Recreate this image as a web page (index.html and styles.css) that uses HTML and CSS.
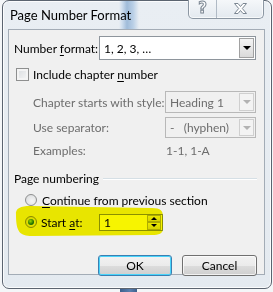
FILE: index.html
```html
<!DOCTYPE html>
<html lang="en">
<head>
  <meta charset="UTF-8">
  <title>Page Number Format</title>
  <link rel="stylesheet" href="styles.css">
</head>
<body>
  <div class="window">
    <div class="titlebar">
      <span class="title">Page Number Format</span>
      <div class="caption-btns">
        <div class="cap-btn help"><span class="help-glyph">?</span></div>
        <div class="cap-btn close">
          <svg width="15" height="13" viewBox="0 0 15 13">
            <path d="M1.5 1.5h3.5l2.5 3 2.5-3h3.5l-4.2 5 4.2 5h-3.5l-2.5-3-2.5 3h-3.5l4.2-5z" fill="#fff" stroke="#7b8692" stroke-width="1" stroke-linejoin="round"/>
          </svg>
        </div>
      </div>
    </div>

    <div class="panel">
      <div class="row row-format">
        <label class="label">Number <u>f</u>ormat:</label>
        <div class="select select-wide">
          <span class="select-text">1, 2, 3, …</span>
          <span class="select-arrow"><i class="tri"></i></span>
        </div>
      </div>

      <div class="row row-check">
        <span class="checkbox"></span>
        <span>Include chapter <u>n</u>umber</span>
      </div>

      <div class="row row-sub row-style">
        <span class="label-sub">Chapter starts with style:</span>
        <div class="select select-off">
          <span class="select-text">Heading 1</span>
          <span class="select-arrow"><i class="tri"></i></span>
        </div>
      </div>

      <div class="row row-sub row-sep">
        <span class="label-sub">Use separator:</span>
        <div class="select select-off">
          <span class="select-text">-&nbsp;&nbsp;&nbsp;(hyphen)</span>
          <span class="select-arrow"><i class="tri"></i></span>
        </div>
      </div>

      <div class="row row-sub row-examples">
        <span class="label-sub">Examples:</span>
        <span class="examples">1-1, 1-A</span>
      </div>

      <div class="row row-group">
        <span>Page numbering</span>
        <span class="group-line"></span>
      </div>

      <div class="row row-radio">
        <span class="radio"></span>
        <span><u>C</u>ontinue from previous section</span>
      </div>

      <div class="row row-radio row-start">
        <span class="radio radio-on"><i class="dot"></i></span>
        <span class="start-label">Start <u>a</u>t:</span>
        <div class="spin">
          <span class="spin-text">1</span>
          <span class="spin-btns">
            <span class="spin-btn"><i class="tri-up"></i></span>
            <span class="spin-btn"><i class="tri"></i></span>
          </span>
        </div>
      </div>

      <div class="row row-buttons">
        <button class="btn btn-default">OK</button>
        <button class="btn">Cancel</button>
      </div>
    </div>

    <svg class="highlight" width="160" height="40" viewBox="0 0 160 40">
      <path d="M4 14 C3 7 9 5 18 5 L140 7 C149 7 151 10 151 16 L151 27 C151 33 147 34 140 34 L20 35 C8 35 4 31 4 14 Z" fill="#f7f400"/>
    </svg>
  </div>
</body>
</html>
```

FILE: styles.css
```css
* {
  margin: 0;
  padding: 0;
  box-sizing: border-box;
}

body {
  width: 273px;
  height: 292px;
  overflow: hidden;
  font-family: 'Lato', 'Noto Sans', sans-serif;
  font-size: 12px;
  color: #000;
  white-space: nowrap;
  background:
    linear-gradient(90deg, transparent 120px, #3d5f8c 120px, #5a7fae 130px, #3d5f8c 137px, transparent 137px) bottom / 100% 6px no-repeat,
    #f4f6f8;
}

u {
  text-decoration: underline;
  text-underline-offset: 2px;
}

/* window frame */
.window {
  position: relative;
  margin-left: 2px;
  width: 270px;
  height: 289px;
  border: 1px solid #5b6470;
  border-radius: 7px;
  background: linear-gradient(180deg, #e9eef3, #e4eaf0);
  box-shadow: inset 0 0 0 1px rgba(255, 255, 255, 0.8);
}

.titlebar {
  display: flex;
  height: 28px;
  align-items: center;
  border-radius: 6px 6px 0 0;
  background: linear-gradient(90deg, transparent 116px, #cfdeee 119px, #9fbbd9 124px, #b9cfe6 130px, transparent 136px);
}

.title {
  padding-left: 7px;
  padding-bottom: 1px;
  font-size: 13px;
  color: #000;
}

.caption-btns {
  display: flex;
  align-self: flex-start;
  margin-left: auto;
  margin-right: 7px;
  margin-top: -2px;
  height: 20px;
  border: 1px solid #8c97a3;
  border-top: none;
  border-radius: 0 0 5px 5px;
  background: linear-gradient(180deg, #f6f8fa, #e3e9ef);
  box-shadow: inset 0 0 0 1px rgba(255, 255, 255, 0.7);
}

.cap-btn {
  display: flex;
  align-items: center;
  justify-content: center;
}

.help {
  width: 28px;
  border-right: 1px solid #b0bac5;
}

.help-glyph {
  font-family: 'DejaVu Sans', sans-serif;
  font-size: 15px;
  font-weight: bold;
  color: #fff;
  -webkit-text-stroke: 1px #7b8692;
  line-height: 1;
}

.close {
  width: 46px;
}

/* client area */
.panel {
  margin: 0 6px 0 5px;
  height: 246px;
  padding: 6px 7px 0 5px;
  border: 1px solid #a3acb6;
  background: #f0f0f0;
}

.row {
  display: flex;
  align-items: center;
}

.row-format {
  height: 24px;
}

.label {
  flex-shrink: 0;
  width: 85px;
}

.select {
  display: flex;
  flex-shrink: 0;
  align-items: center;
  height: 100%;
  border: 1px solid #8e959c;
  background: #fff;
}

.select-wide {
  width: 157px;
}

.select-text {
  flex: 1;
  padding-left: 4px;
}

.select-arrow {
  display: flex;
  align-items: center;
  justify-content: center;
  width: 15px;
  height: calc(100% - 2px);
  margin-right: 1px;
  border: 1px solid #a1a1a1;
  background: linear-gradient(180deg, #f4f4f4, #dadada);
}

.tri {
  width: 0;
  height: 0;
  border-left: 4px solid transparent;
  border-right: 4px solid transparent;
  border-top: 4px solid #000;
}

.tri-up {
  width: 0;
  height: 0;
  border-left: 3px solid transparent;
  border-right: 3px solid transparent;
  border-bottom: 3px solid #000;
}

.row-check {
  height: 22px;
  margin-top: 3px;
  padding-left: 2px;
  gap: 4px;
}

.checkbox {
  width: 13px;
  height: 13px;
  border: 1px solid #8e8f8f;
  background: linear-gradient(135deg, #d9dcdf, #f7f7f7);
  box-shadow: inset 0 0 0 2px #f4f4f4;
}

.row-sub {
  padding-left: 19px;
  color: #6d6d6d;
}

.label-sub {
  flex-shrink: 0;
  width: 132px;
}

.row-style {
  height: 22px;
  margin-top: 6px;
}

.row-sep {
  height: 21px;
  margin-top: 4px;
}

.select-off {
  width: 91px;
  border-color: #b8b8b8;
  background: #f0f0f0;
  color: #6d6d6d;
}

.select-off .select-arrow {
  border-color: #cfcfcf;
  background: #f3f3f3;
}

.select-off .tri {
  border-top-color: #b2b2b2;
}

.row-examples {
  height: 18px;
  margin-top: 3px;
}

.examples {
  padding-left: 1px;
}

.row-group {
  height: 18px;
  margin-top: 10px;
  gap: 4px;
}

.group-line {
  flex: 1;
  height: 2px;
  margin-top: 2px;
  background: #d5dfe5;
  border-bottom: 1px solid #fff;
}

.row-radio {
  height: 18px;
  margin-top: 4px;
  padding-left: 11px;
  gap: 5px;
}

.radio {
  display: flex;
  align-items: center;
  justify-content: center;
  width: 12px;
  height: 12px;
  border: 1px solid #8e8f8f;
  border-radius: 50%;
  background: radial-gradient(circle at 60% 60%, #f6f6f6, #d6d8da);
}

.radio-on .dot {
  width: 6px;
  height: 6px;
  border-radius: 50%;
  background: radial-gradient(circle at 40% 35%, #9fe0ff, #1f77c8 60%, #155a9c);
}

.start-label {
  flex-shrink: 0;
  width: 53px;
  margin-left: -1px;
}

.spin {
  display: flex;
  flex-shrink: 0;
  align-items: center;
  width: 64px;
  height: 17px;
  border: 1px solid #8e959c;
  background: #fff;
}

.spin-text {
  flex: 1;
  padding-left: 4px;
}

.spin-btns {
  display: flex;
  flex-direction: column;
  width: 14px;
  height: 15px;
  margin-right: 1px;
}

.spin-btn {
  flex: 1;
  display: flex;
  align-items: center;
  justify-content: center;
  border: 1px solid #b4b4b4;
  background: linear-gradient(180deg, #f4f4f4, #dedede);
}

.spin-btn .tri {
  border-left-width: 3px;
  border-right-width: 3px;
  border-top-width: 3px;
}

.row-buttons {
  justify-content: flex-end;
  gap: 10px;
  margin-top: 24px;
  height: 21px;
}

.btn {
  width: 75px;
  height: 21px;
  font-family: 'Lato', 'Noto Sans', sans-serif;
  font-size: 12px;
  color: #000;
  border: 1px solid #707070;
  border-radius: 3px;
  background: linear-gradient(180deg, #f2f2f2 0, #ebebeb 50%, #dddddd 51%, #cfcfcf 100%);
  box-shadow: inset 0 0 0 1px rgba(255, 255, 255, 0.7);
}

.btn-default {
  width: 74px;
  border-color: #3c7fb1;
  box-shadow: inset 0 0 0 1px #48d4fb;
}

/* marker stroke drawn over the dialog */
.highlight {
  position: absolute;
  left: 9px;
  top: 200px;
  mix-blend-mode: multiply;
  pointer-events: none;
}
```
